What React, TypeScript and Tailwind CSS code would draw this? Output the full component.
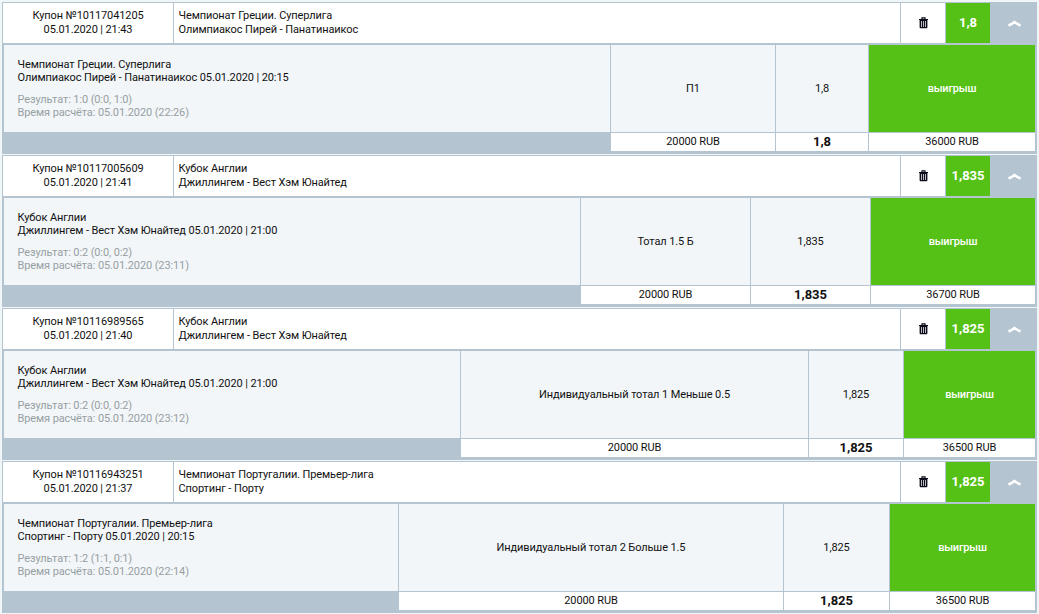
import React from 'react';

const coupons = [
  {
    id: '10117041205',
    placed: '05.01.2020 | 21:43',
    league: 'Чемпионат Греции. Суперлига',
    match: 'Олимпиакос Пирей - Панатинаикос',
    start: '05.01.2020 | 20:15',
    result: '1:0 (0:0, 1:0)',
    settled: '05.01.2020 (22:26)',
    pick: 'П1',
    odds: '1,8',
    payout: '36000 RUB',
    columns: 'grid-cols-[606px_164px_92px_166px]',
  },
  {
    id: '10117005609',
    placed: '05.01.2020 | 21:41',
    league: 'Кубок Англии',
    match: 'Джиллингем - Вест Хэм Юнайтед',
    start: '05.01.2020 | 21:00',
    result: '0:2 (0:0, 0:2)',
    settled: '05.01.2020 (23:11)',
    pick: 'Тотал 1.5 Б',
    odds: '1,835',
    payout: '36700 RUB',
    columns: 'grid-cols-[576px_169px_119px_164px]',
  },
  {
    id: '10116989565',
    placed: '05.01.2020 | 21:40',
    league: 'Кубок Англии',
    match: 'Джиллингем - Вест Хэм Юнайтед',
    start: '05.01.2020 | 21:00',
    result: '0:2 (0:0, 0:2)',
    settled: '05.01.2020 (23:12)',
    pick: 'Индивидуальный тотал 1 Меньше 0.5',
    odds: '1,825',
    payout: '36500 RUB',
    columns: 'grid-cols-[456px_347px_94px_131px]',
  },
  {
    id: '10116943251',
    placed: '05.01.2020 | 21:37',
    league: 'Чемпионат Португалии. Премьер-лига',
    match: 'Спортинг - Порту',
    start: '05.01.2020 | 20:15',
    result: '1:2 (1:1, 0:1)',
    settled: '05.01.2020 (22:14)',
    pick: 'Индивидуальный тотал 2 Больше 1.5',
    odds: '1,825',
    payout: '36500 RUB',
    columns: 'grid-cols-[394px_384px_105px_145px]',
  },
];

function TrashIcon() {
  return (
    <svg width="10" height="12" viewBox="0 0 10 12" fill="none">
      <path d="M4 2V.8h3V2M1 2.5h9" stroke="#0b0b1c" strokeWidth="1.2" />
      <path d="M1.6 3h7.800v7.300a1 1 0 0 1-1 1H2.600a1 1 0 0 1-1-1z" fill="#0b0b1c" />
      <path d="M3.5 4v6M5.5 4v6M7.5 4v6" stroke="#fff" strokeOpacity=".8" strokeWidth=".9" />
    </svg>
  );
}

function ChevronIcon() {
  return (
    <svg width="13" height="7" viewBox="0 0 13 7" fill="none">
      <path d="M.5 5.5Q4.5 3.8 6.5 1.8Q8.5 3.8 12.5 5.5" stroke="#fff" strokeWidth="2.5" strokeLinejoin="round" />
    </svg>
  );
}

function Coupon({ coupon }: { coupon: (typeof coupons)[number] }) {
  return (
    <div className="h-[152px] w-[1035px] bg-[#b4c4d1] pt-px">
      {/* Header */}
      <div className="ml-px grid h-10 grid-cols-[170px_726px_44px_44px_46px] gap-x-px leading-[14px]">
        <div className="bg-white pt-1.5 text-center">
          <div>Купон №{coupon.id}</div>
          <div>{coupon.placed}</div>
        </div>
        <div className="bg-white pt-1.5 pl-[4.5px]">
          <div>{coupon.league}</div>
          <div>{coupon.match}</div>
        </div>
        <div className="flex items-center justify-center bg-white">
          <TrashIcon />
        </div>
        <div className="flex items-center justify-center bg-[#55c015] text-[13px] font-bold tracking-normal text-white">
          {coupon.odds}
        </div>
        <div className="flex items-center justify-center">
          <ChevronIcon />
        </div>
      </div>

      {/* Bet details */}
      <div className={`mt-0.5 ml-0.5 grid h-[87px] gap-x-px leading-[13px] ${coupon.columns}`}>
        <div className="bg-[#f2f6f9] pt-[13px] pl-[13.5px]">
          <div>{coupon.league}</div>
          <div>{coupon.match} {coupon.start}</div>
          <div className="mt-[9px] text-[#979fa2]">
            <div>Результат: {coupon.result}</div>
            <div>Время расчёта: {coupon.settled}</div>
          </div>
        </div>
        <div className="flex items-center justify-center bg-[#f2f6f9]">{coupon.pick}</div>
        <div className="flex items-center justify-center bg-[#f2f6f9]">{coupon.odds}</div>
        <div className="flex items-center justify-center bg-[#55c015] font-medium tracking-[-0.2px] text-white">выигрыш</div>
      </div>

      {/* Totals */}
      <div className={`mt-px ml-0.5 grid h-[18px] gap-x-px text-center leading-[17px] ${coupon.columns}`}>
        <div />
        <div className="bg-white">20000 RUB</div>
        <div className="bg-white text-[13px] leading-[18px] font-bold tracking-normal">{coupon.odds}</div>
        <div className="bg-white">{coupon.payout}</div>
      </div>
    </div>
  );
}

export default function App() {
  return (
    <div className="h-[614px] w-[1039px] overflow-hidden bg-[#f0f5f8] font-['Roboto',sans-serif] text-[11px] tracking-[-0.11px] text-[#111]">
      <div className="flex flex-col gap-px pt-0.5 pl-0.5">
        {coupons.map((coupon) => (
          <Coupon key={coupon.id} coupon={coupon} />
        ))}
      </div>
    </div>
  );
}
